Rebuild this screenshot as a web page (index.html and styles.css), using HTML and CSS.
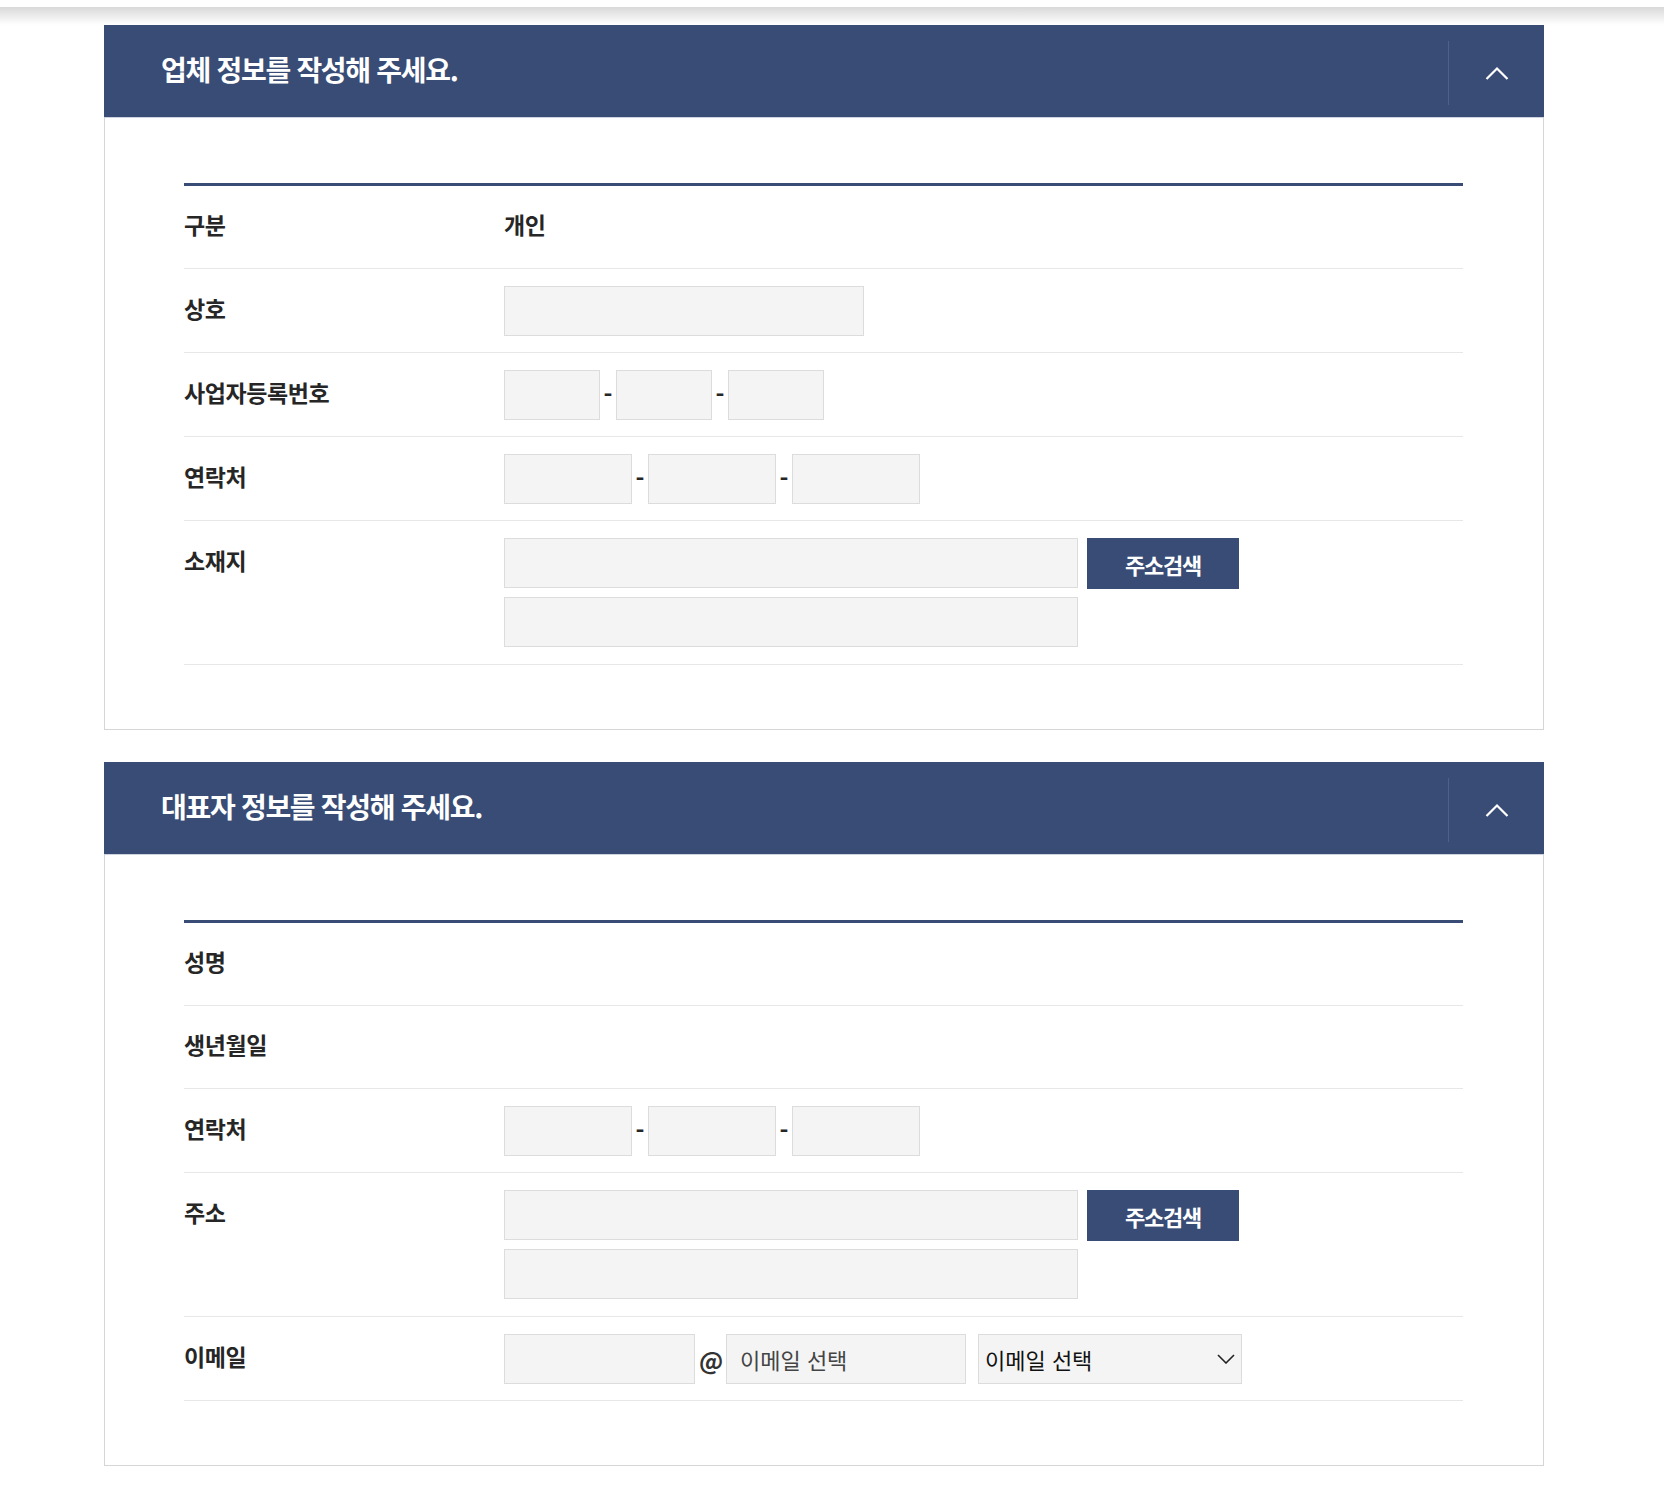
FILE: index.html
```html
<!DOCTYPE html>
<html lang="ko">
<head>
<meta charset="utf-8">
<title>정보 작성</title>
<link rel="stylesheet" href="styles.css">
</head>
<body>
<div class="topbar"></div>
<main class="page">
  <section class="panel">
    <div class="panel-head">
      <h2 class="panel-title">업체 정보를 작성해 주세요.</h2>
      <button class="panel-toggle" type="button" aria-label="접기">
        <svg width="24" height="14" viewBox="0 0 24 14"><path d="M1.5 13 L12 2.5 L22.5 13" fill="none" stroke="#fff" stroke-width="2.2"/></svg>
      </button>
    </div>
    <div class="panel-body">
      <div class="form-table">
        <div class="row text-row"><div class="label">구분</div><div class="value">개인</div></div>
        <div class="row"><div class="label">상호</div><div class="field"><input class="inp w360" type="text"></div></div>
        <div class="row"><div class="label">사업자등록번호</div>
          <div class="field"><input class="inp w96" type="text"><span class="dash">-</span><input class="inp w96" type="text"><span class="dash">-</span><input class="inp w96" type="text"></div>
        </div>
        <div class="row"><div class="label">연락처</div>
          <div class="field"><input class="inp w128" type="text"><span class="dash">-</span><input class="inp w128" type="text"><span class="dash">-</span><input class="inp w128" type="text"></div>
        </div>
        <div class="row addr-row"><div class="label">소재지</div>
          <div class="addr"><input class="inp" type="text"><button class="btn" type="button">주소검색</button><input class="inp" type="text"></div>
        </div>
      </div>
    </div>
  </section>

  <section class="panel">
    <div class="panel-head">
      <h2 class="panel-title">대표자 정보를 작성해 주세요.</h2>
      <button class="panel-toggle" type="button" aria-label="접기">
        <svg width="24" height="14" viewBox="0 0 24 14"><path d="M1.5 13 L12 2.5 L22.5 13" fill="none" stroke="#fff" stroke-width="2.2"/></svg>
      </button>
    </div>
    <div class="panel-body">
      <div class="form-table">
        <div class="row text-row"><div class="label">성명</div><div class="value"></div></div>
        <div class="row text-row"><div class="label">생년월일</div><div class="value"></div></div>
        <div class="row"><div class="label">연락처</div>
          <div class="field"><input class="inp w128" type="text"><span class="dash">-</span><input class="inp w128" type="text"><span class="dash">-</span><input class="inp w128" type="text"></div>
        </div>
        <div class="row addr-row"><div class="label">주소</div>
          <div class="addr"><input class="inp" type="text"><button class="btn" type="button">주소검색</button><input class="inp" type="text"></div>
        </div>
        <div class="row"><div class="label">이메일</div>
          <div class="field">
            <input class="inp w191" type="text"><span class="at">@</span><input class="inp w240 ph" type="text" placeholder="이메일 선택">
            <div class="select"><span>이메일 선택</span>
              <svg width="18" height="10" viewBox="0 0 18 10"><path d="M1 1 L9 9 L17 1" fill="none" stroke="#222" stroke-width="1.6"/></svg>
            </div>
          </div>
        </div>
      </div>
    </div>
  </section>
</main>
</body>
</html>
```

FILE: styles.css
```css
body {
  margin: 0;
  background: #fff;
  font-family: "Noto Sans CJK KR", "Noto Sans", sans-serif;
  color: #333;
}

.topbar {
  height: 25px;
  background: linear-gradient(to bottom, #fff 0, #fff 7px, #d9d9d9 7px, #fff 25px);
}

.page {
  width: 1440px;
  padding-left: 104px;
  padding-bottom: 30px;
}

.panel + .panel {
  margin-top: 32px;
}

.panel-head {
  box-sizing: border-box;
  height: 93px;
  background: #394c75;
  border-bottom: 1px solid #cdd2dc;
  display: flex;
  align-items: center;
}

.panel-title {
  flex: 1;
  margin: 0;
  padding: 0 0 4px 57px;
  color: #fff;
  font-size: 28px;
  font-weight: 700;
  letter-spacing: -1.3px;
  line-height: 1;
}

.panel-toggle {
  width: 96px;
  height: 64px;
  margin-top: 3px;
  padding: 0;
  border: 0;
  border-left: 1px solid #4f6089;
  background: transparent;
  display: flex;
  align-items: center;
  justify-content: center;
}

.panel-body {
  border: 1px solid #d6d6d6;
  border-top: 0;
  padding: 65px 80px 64px 79px;
}

.form-table {
  border-top: 3px solid #394c75;
}

.row {
  display: flex;
  padding: 17px 0 16px;
  border-bottom: 1px solid #e7e7e7;
}

.row.text-row {
  padding: 16px 0;
}

.row.addr-row {
  padding-bottom: 17px;
}

.label,
.value {
  font-size: 23px;
  font-weight: 700;
  color: #262626;
  letter-spacing: -0.4px;
  line-height: 45px;
  height: 50px;
}

.label {
  width: 320px;
  flex: none;
}

.field {
  display: flex;
  align-items: center;
}

.inp {
  box-sizing: border-box;
  height: 50px;
  margin: 0;
  padding: 0 13px;
  background: #f4f4f4;
  border: 1px solid #dcdcdc;
  border-radius: 0;
  font-family: inherit;
  font-size: 22px;
  color: #333;
  outline: none;
}

.w360 { width: 360px; }
.w96 { width: 96px; }
.w128 { width: 128px; }
.w191 { width: 191px; }
.w240 { width: 240px; }

.ph::placeholder {
  color: #444;
  opacity: 1;
}

.dash {
  width: 16px;
  text-align: center;
  font-size: 24px;
  font-weight: 700;
  color: #262626;
  line-height: 1;
  padding-bottom: 3px;
}

.at {
  width: 31px;
  text-align: center;
  font-size: 24px;
  font-weight: 700;
  color: #333;
  padding-left: 1px;
  box-sizing: border-box;
}

.addr {
  display: grid;
  grid-template-columns: 574px 152px;
  column-gap: 9px;
  row-gap: 8px;
}

.btn {
  height: 51px;
  margin: 0;
  padding: 0;
  border: 0;
  background: #394c75;
  color: #fff;
  font-family: inherit;
  font-size: 22px;
  font-weight: 700;
  letter-spacing: -1.3px;
}

.select {
  box-sizing: border-box;
  width: 264px;
  height: 50px;
  margin-left: 12px;
  padding: 0 6px 0 6px;
  background: #f4f4f4;
  border: 1px solid #dcdcdc;
  display: flex;
  align-items: center;
  justify-content: space-between;
  font-size: 22px;
  color: #111;
}
```
